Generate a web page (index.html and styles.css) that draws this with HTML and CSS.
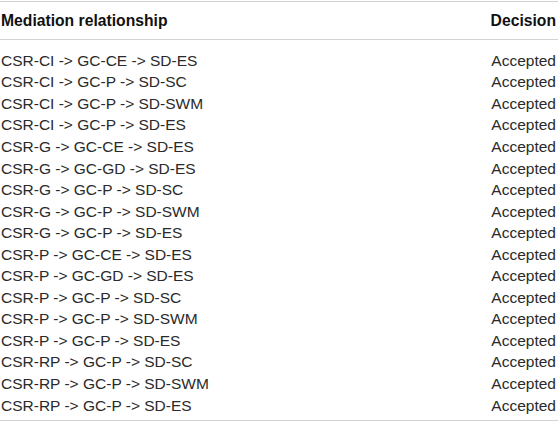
FILE: index.html
```html
<!DOCTYPE html>
<html>
<head>
<meta charset="utf-8">
<link rel="stylesheet" href="styles.css">
</head>
<body>
<table class="tbl">
  <thead>
    <tr><th class="c1">Mediation relationship</th><th class="c2">Decision</th></tr>
  </thead>
  <tbody>
    <tr><td class="c1">CSR-CI -&gt; GC-CE -&gt; SD-ES</td><td class="c2">Accepted</td></tr>
    <tr><td class="c1">CSR-CI -&gt; GC-P -&gt; SD-SC</td><td class="c2">Accepted</td></tr>
    <tr><td class="c1">CSR-CI -&gt; GC-P -&gt; SD-SWM</td><td class="c2">Accepted</td></tr>
    <tr><td class="c1">CSR-CI -&gt; GC-P -&gt; SD-ES</td><td class="c2">Accepted</td></tr>
    <tr><td class="c1">CSR-G -&gt; GC-CE -&gt; SD-ES</td><td class="c2">Accepted</td></tr>
    <tr><td class="c1">CSR-G -&gt; GC-GD -&gt; SD-ES</td><td class="c2">Accepted</td></tr>
    <tr><td class="c1">CSR-G -&gt; GC-P -&gt; SD-SC</td><td class="c2">Accepted</td></tr>
    <tr><td class="c1">CSR-G -&gt; GC-P -&gt; SD-SWM</td><td class="c2">Accepted</td></tr>
    <tr><td class="c1">CSR-G -&gt; GC-P -&gt; SD-ES</td><td class="c2">Accepted</td></tr>
    <tr><td class="c1">CSR-P -&gt; GC-CE -&gt; SD-ES</td><td class="c2">Accepted</td></tr>
    <tr><td class="c1">CSR-P -&gt; GC-GD -&gt; SD-ES</td><td class="c2">Accepted</td></tr>
    <tr><td class="c1">CSR-P -&gt; GC-P -&gt; SD-SC</td><td class="c2">Accepted</td></tr>
    <tr><td class="c1">CSR-P -&gt; GC-P -&gt; SD-SWM</td><td class="c2">Accepted</td></tr>
    <tr><td class="c1">CSR-P -&gt; GC-P -&gt; SD-ES</td><td class="c2">Accepted</td></tr>
    <tr><td class="c1">CSR-RP -&gt; GC-P -&gt; SD-SC</td><td class="c2">Accepted</td></tr>
    <tr><td class="c1">CSR-RP -&gt; GC-P -&gt; SD-SWM</td><td class="c2">Accepted</td></tr>
    <tr><td class="c1">CSR-RP -&gt; GC-P -&gt; SD-ES</td><td class="c2">Accepted</td></tr>
  </tbody>
</table>
</body>
</html>
```
FILE: styles.css
```css
html, body {
  margin: 0;
  padding: 0;
  background: #fff;
}
.tbl {
  width: 558px;
  border-collapse: collapse;
  font-family: "Liberation Sans", Arial, sans-serif;
  font-size: 15.5px;
  color: #2a2a2a;
  margin-top: 1px;
  border-top: 1px solid #d2d2d2;
  border-bottom: 1px solid #d2d2d2;
}
.tbl th {
  font-weight: bold;
  font-size: 15.7px;
  color: #111;
  height: 37px;
  padding: 0 2px 0 1px;
  border-bottom: 1px solid #d2d2d2;
}
.tbl td {
  height: 21.56px;
  padding: 0 2px 0 1px;
  line-height: 18px;
}
.tbl tbody tr:first-child td { padding-top: 10px; }
.tbl tbody tr:last-child td { padding-bottom: 4px; }
.c1 { text-align: left; }
.c2 { text-align: right; }
```
